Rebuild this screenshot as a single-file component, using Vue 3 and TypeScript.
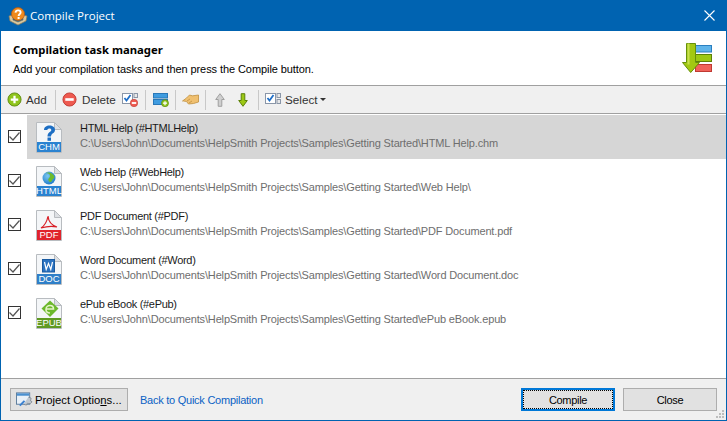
<script setup lang="ts">
interface Task { name: string; path: string; type: string; color: string }
const base = 'C:\\Users\\John\\Documents\\HelpSmith Projects\\Samples\\Getting Started\\'
const tasks: Task[] = [
  { name: 'HTML Help (#HTMLHelp)', path: base + 'HTML Help.chm', type: 'CHM', color: '#2a82d0' },
  { name: 'Web Help (#WebHelp)', path: base + 'Web Help\\', type: 'HTML', color: '#2a82d0' },
  { name: 'PDF Document (#PDF)', path: base + 'PDF Document.pdf', type: 'PDF', color: '#e0242c' },
  { name: 'Word Document (#Word)', path: base + 'Word Document.doc', type: 'DOC', color: '#2f7fc8' },
  { name: 'ePub eBook (#ePub)', path: base + 'ePub eBook.epub', type: 'EPUB', color: '#5f9a22' },
]
</script>

<template>
  <div class="window">
    <div class="titlebar">
      <svg class="appicon" width="20" height="20" viewBox="0 0 20 20">
        <path d="M1 10l4-1v5l5 2 5-2V9l4 1-1 5-8 4-8-4z" fill="#d8c8a0" stroke="#8a7a58" stroke-width=".7"/>
        <circle cx="10" cy="8" r="6.500" fill="#f08a1c" stroke="#b8560c" stroke-width=".7"/>
        <path d="M7.500 6.600c.2-1.600 1.300-2.200 2.600-2.200 1.500 0 2.500.9 2.500 2.100 0 1.800-2 1.800-2 3.400" fill="none" stroke="#fff" stroke-width="1.900"/>
        <rect x="9.600" y="11" width="2" height="2" fill="#fff"/>
      </svg>
      <span class="title">Compile Project</span>
      <svg class="closex" width="11" height="11" viewBox="0 0 11 11"><path d="M.5.5l10 10M10.500.5l-10 10" stroke="#fff" stroke-width="1.100"/></svg>
    </div>
    <div class="body">
      <div class="header">
        <div class="htext">
          <div class="htitle">Compilation task manager</div>
          <div class="hsub">Add your compilation tasks and then press the Compile button.</div>
        </div>
        <svg class="hicon" width="31" height="32" viewBox="0 0 31 32">
          <rect x="13.500" y="4.500" width="16" height="6.500" fill="#5fb4ea" stroke="#2a7fc0"/>
          <rect x="13.500" y="13.500" width="16" height="7" fill="#9cc814" stroke="#5c8208"/>
          <rect x="13.500" y="23.500" width="16" height="7" fill="#f0625a" stroke="#c03a32"/>
          <path d="M4.500 2.500h9v19h4L8.700 31.500.5 21.500h4z" fill="#a2c812" stroke="#66900a"/>
          <path d="M6.500 2.500v21" fill="none" stroke="#c8e050" stroke-width="2"/>
        </svg>
      </div>
      <div class="toolbar">
        <button class="tool t-add">
          <svg width="15" height="15" viewBox="0 0 16 16"><circle cx="8" cy="8" r="7" fill="#8fc41c" stroke="#5f8c10"/><path d="M8 4v8M4 8h8" stroke="#fff" stroke-width="2.400"/></svg>
          <span>Add</span>
        </button>
        <i class="sep"></i>
        <button class="tool t-del">
          <svg width="15" height="15" viewBox="0 0 16 16"><circle cx="8" cy="8" r="7" fill="#ee5a50" stroke="#c03a32"/><rect x="3.500" y="6.600" width="9" height="2.800" fill="#fff"/></svg>
          <span>Delete</span>
        </button>
        <button class="tool t-chk">
          <svg width="16" height="15" viewBox="0 0 16 15"><rect x=".5" y="1.500" width="10" height="10" fill="#fff" stroke="#8a96a8"/><path d="M2.500 6l2 2.500 4-5.500" fill="none" stroke="#1f6fc8" stroke-width="1.800"/><rect x="12" y="1.500" width="3.500" height="4" fill="#e8e8e8" stroke="#8a96a8"/><circle cx="12" cy="11" r="3.700" fill="#ee5a50" stroke="#c03a32" stroke-width=".6"/><rect x="9.800" y="10.100" width="4.400" height="1.800" fill="#fff"/></svg>
        </button>
        <i class="sep"></i>
        <button class="tool t-blue">
          <svg width="16" height="15" viewBox="0 0 16 15"><rect x=".5" y="1.500" width="14" height="4.500" fill="#3f9ce0" stroke="#2a78b8"/><rect x=".5" y="7.500" width="14" height="5" fill="#3f9ce0" stroke="#2a78b8"/><circle cx="12" cy="11.200" r="3.500" fill="#8fc41c" stroke="#5f8c10" stroke-width=".7"/><path d="M12 9.200v4M10 11.200h4" stroke="#fff" stroke-width="1.200"/></svg>
        </button>
        <i class="sep"></i>
        <button class="tool t-hand">
          <svg width="17" height="15" viewBox="0 0 17 15"><path d="M.5 9l4-3 3-3 3 .8 6-.8v7l-5 1.500-5 .5-2-2.500-3-.5z" fill="#f0c070" stroke="#c09040" stroke-width=".8"/><path d="M5 9l3-2M7 11l3-2" stroke="#c09040" stroke-width=".8"/></svg>
        </button>
        <i class="sep"></i>
        <button class="tool t-up">
          <svg width="10" height="14" viewBox="0 0 10 14"><path d="M5 .7L.7 6.500h2.500v6.800h3.600V6.500h2.500z" fill="#cfcfcf" stroke="#a0a0a0"/></svg>
        </button>
        <button class="tool t-down">
          <svg width="10" height="14" viewBox="0 0 10 14"><path d="M5 13.300L.7 7.500h2.500V.7h3.600v6.800h2.500z" fill="#9cc814" stroke="#5c8208"/></svg>
        </button>
        <i class="sep"></i>
        <button class="tool t-sel">
          <svg width="16" height="15" viewBox="0 0 16 15"><rect x=".5" y="1.500" width="10" height="10" fill="#fff" stroke="#8a96a8"/><path d="M2.500 6l2 2.500 4-5.500" fill="none" stroke="#1f6fc8" stroke-width="1.800"/><rect x="12" y="1.500" width="3.500" height="4" fill="#e8e8e8" stroke="#8a96a8"/><rect x="12" y="7.500" width="3.500" height="4" fill="#e8e8e8" stroke="#8a96a8"/></svg>
          <span>Select</span><i class="caret"></i>
        </button>
      </div>
      <div class="list">
        <div v-for="(t, i) in tasks" :key="t.type" class="row">
          <span class="check"><svg width="11" height="9" viewBox="0 0 11 9"><path d="M.5 4.500l3.500 3.500L10.500.5" fill="none" stroke="#555" stroke-width="1.200"/></svg></span>
          <div class="item" :class="{ selected: i === 0 }">
            <div class="fileicon">
              <svg width="26" height="31" viewBox="0 0 26 31">
                <defs>
                  <radialGradient id="globe" cx=".4" cy=".35" r=".7"><stop offset="0" stop-color="#7cc8f0"/><stop offset="1" stop-color="#1a78c8"/></radialGradient>
                </defs>
                <path d="M.5.5h18l7 7v23H.5z" fill="#f4f6f8" stroke="#b8bcc0"/>
                <path d="M18.500.5v7h7z" fill="#dde0e4" stroke="#b8bcc0"/>
                <g v-if="t.type === 'CHM'"><path d="M8 8c0-3 2.500-4.500 5.500-4.500 3 0 5.500 1.800 5.500 4.200 0 3.800-4 3.300-4 6.800h-3.500c0-4.800 3.800-4.200 3.800-6.500 0-.9-.8-1.500-1.800-1.500S11.500 7 11.300 8z" fill="#1d6fc4"/><rect x="11.500" y="15.500" width="3.500" height="3.300" fill="#1d6fc4"/></g>
                <g v-else-if="t.type === 'HTML'"><circle cx="13" cy="12" r="6.500" fill="url(#globe)"/><path d="M9.500 7c3 0 4.500 1 4.500 3s-2.500 2.500-1.500 4.500 2.500 2 3.500 0 2.500-2.500 2.500-3.500c-1-3-3.500-4.500-6-4.500z" fill="#6cbc2c"/></g>
                <g v-else-if="t.type === 'PDF'"><path d="M5 18c3-2 6-6 7-12 .3 4 3 9 9 11-5-1-11-.5-16 1z" fill="none" stroke="#d81e26" stroke-width="1.200"/></g>
                <g v-else-if="t.type === 'DOC'"><rect x="6.500" y="5.500" width="12" height="12.500" fill="#2a72c0" stroke="#1a5aa0"/><path d="M8.500 8l1.700 7.500 2.300-6 2.300 6L16.500 8" fill="none" stroke="#fff" stroke-width="1.200"/></g>
                <g v-else><path d="M14 2.500l8.500 8L14 19l-8.500-8.500z" fill="#6cb82c"/><path d="M10 11h7.500c0-2-1.500-3.500-3.500-3.500S10 9 10 11.500 12 15 14 15" fill="none" stroke="#e4f4c8" stroke-width="1.600"/></g>
                <rect x="1" y="20" width="24" height="10" :fill="t.color"/>
              </svg>
              <span class="ftype">{{ t.type }}</span>
            </div>
            <div class="itext">
              <div class="iname">{{ t.name }}</div>
              <div class="ipath">{{ t.path }}</div>
            </div>
          </div>
        </div>
      </div>
      <div class="footer">
        <button class="btn options">
          <svg width="17" height="17" viewBox="0 0 18 17"><rect x=".5" y="1.500" width="14" height="12" fill="#e8f0f8" stroke="#5a7a9a"/><rect x="1" y="2" width="13" height="2.500" fill="#4a90d0"/><path d="M13 6l3 1-.5 3 1.500 1-2 2-3-.5-1 2-3-1" fill="#c0c8d0" stroke="#707880" stroke-width=".7"/><path d="M4 15l5-5" stroke="#3a80d0" stroke-width="2"/></svg>
          <span>Project Optio<u>n</u>s...</span>
        </button>
        <a class="link">Back to Quick Compilation</a>
        <span class="grow"></span>
        <button class="btn compile">Compile</button>
        <button class="btn close">Close</button>
        <svg class="grip" width="8" height="8" viewBox="0 0 8 8" fill="#bdbdbd"><rect x="6" y="0" width="2" height="2"/><rect x="3" y="3" width="2" height="2"/><rect x="6" y="3" width="2" height="2"/><rect x="0" y="6" width="2" height="2"/><rect x="3" y="6" width="2" height="2"/><rect x="6" y="6" width="2" height="2"/></svg>
      </div>
    </div>
  </div>
</template>

<style>
html, body { margin: 0; padding: 0; background: #0063b1; overflow: hidden; }
</style>

<style scoped>
* { box-sizing: border-box; }
.window {
  width: 727px; height: 421px; display: flex; flex-direction: column;
  font-family: "Liberation Sans", Arial, sans-serif; font-size: 11px; color: #000;
  background: #0063b1;
}
.titlebar { height: 31px; flex: none; display: flex; align-items: center; padding: 0 10px 0 8px; color: #fff; }
.appicon { margin-right: 2px; }
.title { font-size: 11.500px; font-family: "Open Sans", sans-serif; flex: 1; }
.closex { margin-right: 2px; }
.body { flex: 1; min-height: 0; margin: 0 1px 1px; display: flex; flex-direction: column; background: #f0f0f0; }
.header { height: 54px; flex: none; background: #fff; display: flex; justify-content: space-between; padding: 10px 13px 0 12px; }
.htitle { font-family: "Noto Sans", sans-serif; font-size: 11.300px; font-weight: 700; line-height: 18px; }
.hsub { line-height: 18px; margin-top: 1px; letter-spacing: -.08px; }
.toolbar { height: 29px; flex: none; display: flex; align-items: center; padding-left: 6px; border-top: 1px solid #a0a0a0; border-bottom: 1px solid #a0a0a0; font-size: 11.700px; }
.tool { display: flex; align-items: center; flex: none; background: none; border: 0; padding: 0; font: inherit; color: #333; height: 22px; }
.t-add { width: 48px; gap: 4px; }
.t-del { width: 66px; gap: 5px; padding-left: 6px; }
.t-chk { width: 23px; }
.t-blue { width: 29px; padding-left: 7px; }
.t-hand { width: 29px; padding-left: 6px; }
.t-up { width: 32px; padding-left: 9px; }
.t-down { width: 20px; }
.t-sel { gap: 4px; padding-left: 6px; }
.sep { width: 1px; height: 20px; background: #c8c8c8; flex: none; }
.caret { width: 0; height: 0; border: 3px solid transparent; border-top-color: #333; border-bottom: 0; margin-left: -1px; }
.list { flex: 1; min-height: 0; background: #fff; padding-top: 1px; display: flex; flex-direction: column; }
.row { height: 44px; display: flex; align-items: center; flex: none; }
.check { width: 13px; height: 13px; border: 1px solid #333; margin: -1px 6px 0 7px; display: flex; align-items: center; justify-content: center; background: #fff; flex: none; }
.item { flex: 1; height: 44px; display: flex; align-items: center; padding-left: 9px; }
.item.selected { background: #d6d6d6; }
.fileicon { width: 26px; height: 31px; position: relative; margin-right: 18px; }
.fileicon svg { display: block; }
.ftype { position: absolute; left: 0; right: 0; bottom: 1px; height: 10px; line-height: 10px; text-align: center; color: #fff; font-size: 9.500px; }
.itext { margin-top: -2px; }
.iname { line-height: 15px; color: #1a1a1a; letter-spacing: -.3px; }
.ipath { line-height: 15px; color: #6e6e6e; letter-spacing: -.15px; }
.footer { height: 42px; flex: none; display: flex; align-items: center; position: relative; border-top: 1px solid #a0a0a0; padding: 0 0 0 9px; }
.btn { height: 23px; background: #e1e1e1; border: 1px solid #adadad; font: inherit; color: #000; padding: 0; white-space: nowrap; letter-spacing: -.3px; }
.options { width: 118px; display: flex; align-items: center; gap: 2px; padding-left: 5px; font-size: 11.300px; letter-spacing: 0; }
.link { color: #0b62c4; margin-left: 12px; letter-spacing: -.25px; }
.grow { flex: 1; }
.compile { width: 94px; border: 2px solid #0078d7; outline: 1px dotted #000; outline-offset: -3px; }
.close { width: 94px; margin-left: 8px; margin-right: 9px; }
.grip { position: absolute; right: 2px; bottom: 2px; }
</style>
